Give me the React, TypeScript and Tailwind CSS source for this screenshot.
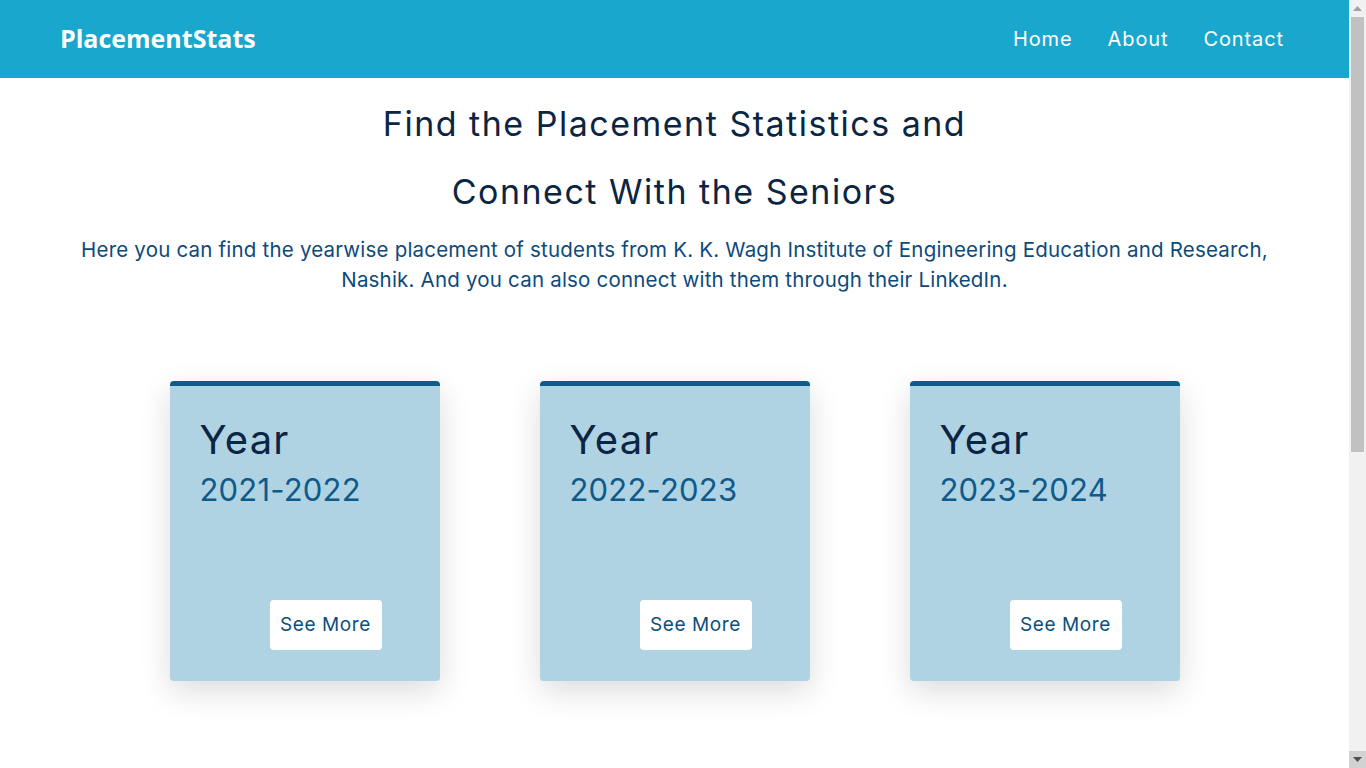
import React from "react";

const poppins = { fontFamily: "Inter, 'Noto Sans', sans-serif" };

function Card({ year }: { year: string }) {
  return (
    <div className="w-[270px] h-[300px] bg-[#b0d3e3] border-t-[5px] border-[#0d5c8a] rounded-[4px] shadow-[0_10px_32px_rgba(0,0,0,0.14)] flex flex-col items-start text-left px-[30px]">
      <div className="mt-[30px] text-[40px] leading-[48px] tracking-[1.2px] text-[#0b2545]">Year</div>
      <div className="mt-[6px] text-[31px] leading-[40px] tracking-[0.2px] text-[#0e5a8a]">{year}</div>
      <div className="mt-auto mb-[31px] ml-[70px]">
        <button className="w-[112px] h-[50px] bg-white rounded-[4px] text-[19px] tracking-[0.6px] text-[#0d4f7a]">See More</button>
      </div>
    </div>
  );
}

function FakeScrollbar() {
  return (
    <div className="fixed top-0 right-0 w-[17px] h-screen bg-[#f1f1f1] flex flex-col">
      <div className="h-[17px] flex items-center justify-center">
        <svg width="9" height="5" viewBox="0 0 9 5"><polygon points="4.5,0 9,5 0,5" fill="#a3a3a3" /></svg>
      </div>
      <div className="relative flex-1">
        <div className="absolute left-[2px] right-[2px] top-0 h-[435px] bg-[#c1c1c1]" />
      </div>
      <div className="h-[17px] bg-[#d2d2d2] flex items-center justify-center">
        <svg width="9" height="5" viewBox="0 0 9 5"><polygon points="0,0 9,0 4.5,5" fill="#505050" /></svg>
      </div>
    </div>
  );
}

export default function App() {
  return (
    <div className="min-h-[1300px] bg-white mr-[17px]" style={poppins}>
      <nav className="h-[78px] bg-[#1aa7cd] flex items-center justify-between pl-[60px] pr-[65px]">
        <div className="text-white font-bold text-[25px]" style={{ fontFamily: "'Open Sans', sans-serif" }}>PlacementStats</div>
        <div className="flex items-center gap-[35px] text-white text-[20px] tracking-[0.9px]">
          <a>Home</a>
          <a>About</a>
          <a>Contact</a>
        </div>
      </nav>
      <section className="flex flex-col items-center text-center">
        <h1 className="mt-[12px] text-[34px] leading-[68px] tracking-[1.5px] text-[#0b2545]">
          Find the Placement Statistics and
          <br />
          Connect With the Seniors
        </h1>
        <p className="mt-[9px] max-w-[1200px] text-[20.5px] leading-[30px] tracking-[0.2px] text-[#0d4a7c]">
          Here you can find the yearwise placement of students from K. K. Wagh Institute of Engineering Education and Research, Nashik. And you can also connect with them through their LinkedIn.
        </p>
        <div className="mt-[86px] flex gap-[100px]">
          <Card year="2021-2022" />
          <Card year="2022-2023" />
          <Card year="2023-2024" />
        </div>
      </section>
      <FakeScrollbar />
    </div>
  );
}
